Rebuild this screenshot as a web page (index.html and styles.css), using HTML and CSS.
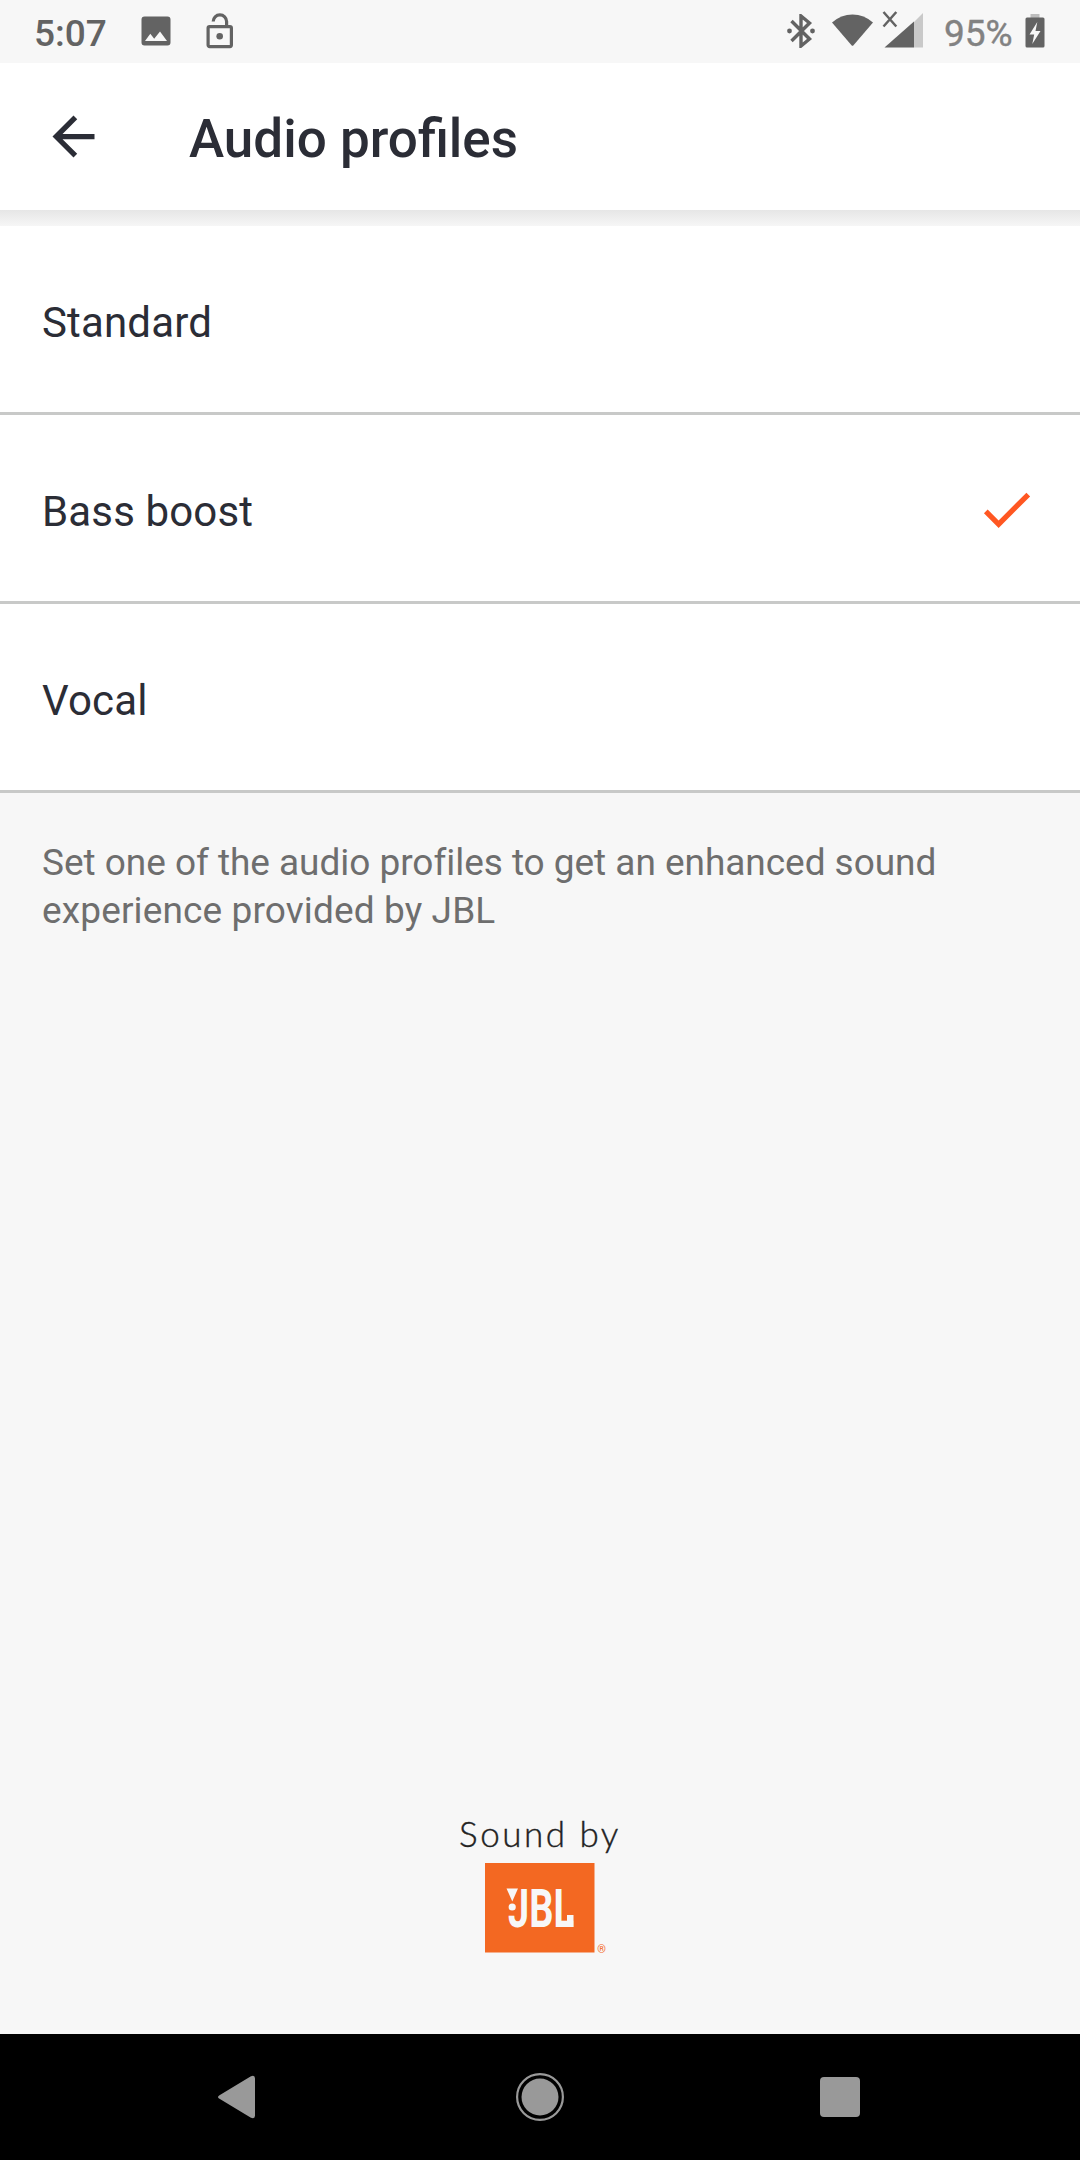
FILE: index.html
```html
<!DOCTYPE html>
<html lang="en">
<head>
<meta charset="utf-8">
<title>Audio profiles</title>
<link rel="stylesheet" href="styles.css">
</head>
<body>
<div class="screen">
  <div class="status">
    <span class="clock">5:07</span>
    <svg class="ic-image" width="30" height="30" viewBox="0 0 30 30"><path fill="#636363" fill-rule="evenodd" d="M3.500 0.500h23a3 3 0 0 1 3 3v23a3 3 0 0 1-3 3h-23a3 3 0 0 1-3-3v-23a3 3 0 0 1 3-3zM4 25h22l-7-9.500-5.800 7.200-3.900-4.900z"/></svg>
    <svg class="ic-lock" width="28" height="36" viewBox="0 0 28 36"><g fill="none" stroke="#636363" stroke-width="3.200"><rect x="2.100" y="13.600" width="23.300" height="20" rx="1.500"/><path d="M7.200 8.500a6.700 6.700 0 0 1 13.400 0v5"/></g><circle cx="13.700" cy="23.200" r="3.300" fill="#636363"/></svg>
    <span class="spacer"></span>
    <svg class="ic-bt" width="28" height="34" viewBox="0 0 28 34"><path d="M4.500 7l18 18-8.500 7V2l8.500 7L4.500 27" fill="none" stroke="#636363" stroke-width="3.400"/><circle cx="2.500" cy="17" r="2.400" fill="#636363"/><circle cx="25.500" cy="17" r="2.400" fill="#636363"/></svg>
    <svg class="ic-wifi" width="42" height="33" viewBox="0 0 42 33"><path d="M0.500 8.600Q9.500 0.500 21 0.500T41.500 8.600L22 31.200Q21 32.200 20 31.200z" fill="#636363"/></svg>
    <svg class="ic-signal" width="42" height="38" viewBox="0 0 42 38"><path d="M41 2v34.500h-9V11z" fill="#c9c9c9"/><path d="M32 10.500v26H2.500z" fill="#636363"/><path d="M1.500 1l12.800 14.500M14.300 1L1.500 15.500" stroke="#636363" stroke-width="2.500"/></svg>
    <span class="percent">95%</span>
    <svg class="ic-battery" width="20" height="34" viewBox="0 0 20 34"><path d="M5.500 0h9v4h-9z" fill="#bdbdbd"/><path d="M2 3.500h16q1.500 0 1.500 1.500v27q0 1.500-1.500 1.500H2q-1.500 0-1.500-1.500V5q0-1.500 1.500-1.500z" fill="#636363"/><path d="M12.300 8L4.500 20.500h4.700L7.300 30l8.200-13h-5z" fill="#f7f7f7"/></svg>
  </div>
  <header class="appbar">
    <svg width="63" height="63" viewBox="0 0 24 24"><path fill="#2b2d36" d="M20 11H7.830l5.590-5.590L12 4l-8 8 8 8 1.410-1.410L7.830 13H20v-2z"/></svg>
    <h1 class="title">Audio profiles</h1>
  </header>
  <div class="shade"></div>
  <ul class="profiles">
    <li class="profile">Standard</li>
    <li class="profile">Bass boost
      <svg class="check" width="63" height="63" viewBox="0 0 24 24"><path fill="#ff5722" d="M9 16.170L4.830 12l-1.420 1.410L9 19 21 7l-1.410-1.410z"/></svg>
    </li>
    <li class="profile">Vocal</li>
  </ul>
  <p class="hint">Set one of the audio profiles to get an enhanced sound<br><span class="hint-end">experience provided by JBL</span></p>
  <div class="brand">
    <span class="brand-caption">Sound by</span>
    <svg class="brand-logo" width="126" height="94" viewBox="0 0 126 94">
      <rect width="109.500" height="89.500" fill="#f36822"/>
      <path d="M21.500 25.500h11.500l-5.700 13z" fill="#f7f7f7"/>
      <circle cx="27.200" cy="44" r="3.600" fill="#f7f7f7"/>
      <text class="logo-letters" x="23" y="64" textLength="66" lengthAdjust="spacingAndGlyphs">JBL</text>
      <path d="M82 52h6.500v12h-6.500z" fill="#f7f7f7"/>
      <text class="logo-mark" x="112.300" y="90">®</text>
    </svg>
  </div>
  <nav class="navbar">
    <svg width="48" height="50" viewBox="0 0 48 50"><path d="M7.500 23.200L38.500 4.500Q43 2.500 43 6.500v37Q43 47.500 38.500 45.500L7.500 26.800Q4.500 25 7.500 23.200z" fill="#999"/></svg>
    <svg width="50" height="50" viewBox="0 0 50 50"><circle cx="25" cy="25" r="22.900" fill="none" stroke="#999" stroke-width="2.200"/><circle cx="25" cy="25" r="18.500" fill="#999"/></svg>
    <svg width="40" height="40" viewBox="0 0 40 40"><rect width="40" height="40" rx="4" fill="#999"/></svg>
  </nav>
</div>
</body>
</html>
```
FILE: styles.css
```css
* { box-sizing: border-box; }
body { margin: 0; font-family: Roboto, "Liberation Sans", sans-serif; color: #2b2d36; }
svg { display: block; flex: none; }
.screen { width: 1080px; height: 2160px; display: flex; flex-direction: column; background: #f7f7f7; }
.status { height: 63px; display: flex; align-items: flex-start; padding: 0 35px 0 34px; color: #636363; }
.clock, .percent { font-size: 37px; line-height: 43px; padding-top: 12px; white-space: nowrap; flex: none; }
.clock { width: 107px; font-weight: 500; }
.ic-image { margin-top: 16px; }
.ic-lock { margin: 13px 0 0 35px; }
.spacer { flex: 1; }
.ic-bt { margin: 14px 17px 0 0; }
.ic-wifi { margin: 14px 8px 0 -1px; width: 43px; }
.ic-signal { margin: 11px 20px 0 0; }
.percent { width: 81px; color: #828282; -webkit-text-stroke: 0.4px #828282; }
.ic-battery { margin-top: 14px; }
.appbar { height: 147px; display: flex; align-items: center; padding: 0 42px; background: #fff; }
.title { margin: 5px 0 0 84px; font-size: 53px; font-weight: 500; line-height: 62px; }
.shade { height: 16px; background: linear-gradient(#e6e6e6, #f6f6f6); }
.profiles { margin: 0; padding: 0; list-style: none; background: #fff; }
.profile { height: 189px; display: flex; align-items: center; justify-content: space-between; padding: 8px 42px 0; border-bottom: 3px solid #c8c9c8; font-size: 42px; line-height: 50px; letter-spacing: 0.15px; }
.check { margin-bottom: 6px; }
.hint { margin: 0; padding: 46px 42px 0; color: #6e6e6e; font-size: 37px; line-height: 48px; letter-spacing: -0.04px; white-space: nowrap; }
.hint-end { letter-spacing: 0.13px; }
.brand { margin-top: auto; height: 220px; display: flex; flex-direction: column; align-items: center; }
.brand-caption { height: 49px; font-family: Lato, sans-serif; font-weight: 300; font-size: 35px; line-height: 38px; letter-spacing: 2.5px; color: #222; -webkit-text-stroke: 0.4px #222; white-space: nowrap; }
.brand-logo { margin-left: 16px; }
.logo-letters { font-family: Roboto, sans-serif; font-weight: 700; font-size: 54px; fill: #f7f7f7; }
.logo-mark { font-family: Roboto, sans-serif; font-size: 11px; fill: #f36822; }
.navbar { height: 126px; flex: none; display: flex; align-items: center; justify-content: space-between; padding: 0 220px 0 212px; background: #000; }
```
